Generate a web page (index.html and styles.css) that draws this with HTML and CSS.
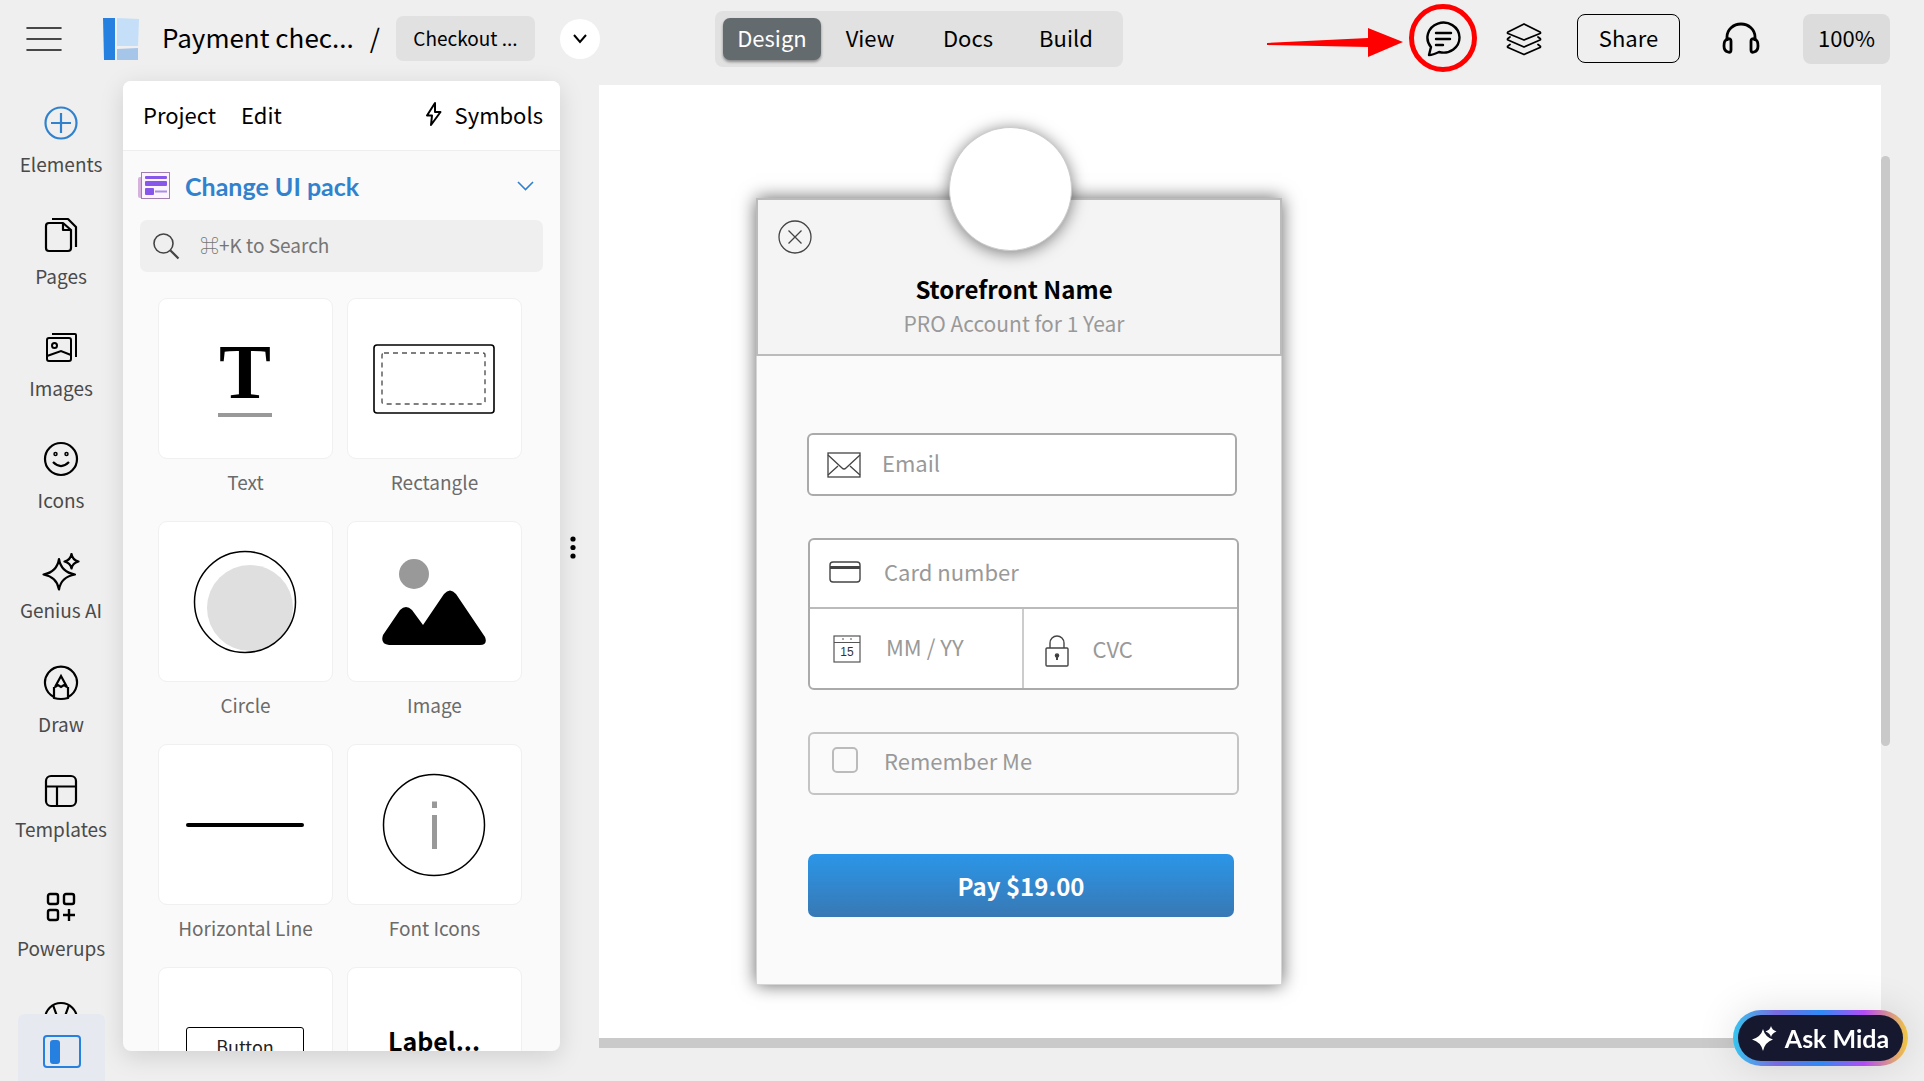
FILE: index.html
```html
<!DOCTYPE html>
<html lang="en">
<head>
  <meta charset="UTF-8" />
  <meta name="viewport" content="width=device-width, initial-scale=1.0"/>
  <title>Payment checkout</title>
  <link rel="stylesheet" href="styles.css">
</head>
<body>
  <header class="topbar">
    <button class="icon-btn" aria-label="Menu">
      <svg width="36" height="24" viewBox="0 0 36 24" stroke="#111" stroke-width="1.600" stroke-linecap="round"><path d="M1 1h34M1 12h34M1 23h34"/></svg>
    </button>
    <a class="logo" href="#" aria-label="Home">
      <svg width="36" height="42" viewBox="0 0 36 42"><path fill="#2680e0" d="M0 0h12v42H1z"/><path fill="#c5dff9" d="M14 0l22 1-1 27H14z"/><path fill="#a5c5e9" d="M14 31l21-1v12H14z"/></svg>
    </a>
    <span class="project-name">Payment chec...</span>
    <span class="slash">/</span>
    <button class="page-btn">Checkout ...</button>
    <button class="round-btn" aria-label="More pages">
      <svg width="16" height="10" viewBox="0 0 16 10" fill="none" stroke="#000" stroke-width="2"><path d="M2 1l6 7 6-7"/></svg>
    </button>

    <nav class="modes">
      <button class="mode active">Design</button>
      <button class="mode">View</button>
      <button class="mode">Docs</button>
      <button class="mode">Build</button>
    </nav>

    <div class="tools">
      <div class="comment-tool">
        <button class="icon-btn" aria-label="Comments">
          <svg width="36" height="36" viewBox="0 0 36 36" fill="none" stroke="#000" stroke-width="2.4" stroke-linecap="round" stroke-linejoin="round"><path d="M4 34l2-8A16 15 0 1 1 14 31C10 33 7 34 4 34z"/><path d="M11 12h15M11 18h14M11 24h7"/></svg>
        </button>
        <span class="callout"></span>
        <svg class="arrow" width="136" height="30" viewBox="0 0 136 30" fill="#f00"><path d="M0 15l101-5V0l35 14-35 15V19L0 17z"/></svg>
      </div>
      <button class="icon-btn layers" aria-label="Layers">
        <svg width="36" height="34" viewBox="0 0 36 34" fill="none" stroke="#000" stroke-width="1.8" stroke-linejoin="round" stroke-linecap="round"><path d="M18 2l16 8q1 1 0 1.500L18 18 2 11.500q-1-.5 0-1.500z"/><path d="M4 15l-2 1.500q-1 1 0 1.500L18 25l16-7q1-.5 0-1.500L32 15"/><path d="M4 22.500L2 24q-1 .5 0 1.500L18 32.500l16-7q1-1 0-1.500l-2-1.500"/></svg>
      </button>
      <button class="share-btn">Share</button>
      <button class="icon-btn help" aria-label="Support">
        <svg width="38" height="34" viewBox="0 0 38 34" fill="none" stroke="#000" stroke-width="2.8"><path d="M5 19v-4a14 13 0 0 1 28 0v4"/><path d="M4 18q-2 1-2 6t4 6q3 1 3-2v-9q0-3-4-2zM34 18q2 1 2 6t-4 6q-3 1-3-2v-9q0-3 4-2z"/></svg>
      </button>
      <button class="zoom-btn">100%</button>
    </div>
  </header>

  <main class="editor">
    <nav class="rail">
      <button class="rail-item active">
        <svg width="36" height="36" viewBox="0 0 36 36" fill="none" stroke="#3182ce" stroke-width="2.200"><circle cx="18" cy="18" r="15.500"/><path d="M8 18h20M18 8v20"/></svg>
        Elements
      </button>
      <button class="rail-item">
        <svg width="36" height="36" viewBox="0 0 36 36" fill="none" stroke="#000" stroke-width="2.200" stroke-linejoin="round"><path d="M6 6h14l8 7v18q0 3-3 3H6q-3 0-3-3V9q0-3 3-3z"/><path d="M20 6v7h8"/><path d="M9 2h16l8 8v20"/></svg>
        Pages
      </button>
      <button class="rail-item">
        <svg width="36" height="36" viewBox="0 0 36 36" fill="none" stroke="#000" stroke-width="2"><rect x="4" y="9" width="24" height="23" rx="2"/><circle cx="11.500" cy="16.500" r="2.500"/><path d="M4 27l14-5 10 4"/><path d="M9 5h23q1 0 1 1v22" /></svg>
        Images
      </button>
      <button class="rail-item">
        <svg width="36" height="36" viewBox="0 0 36 36" fill="none" stroke="#000" stroke-width="2.200"><circle cx="18" cy="18" r="16"/><circle cx="12.500" cy="13" r="1.500" stroke-width="1.500"/><circle cx="23.500" cy="13" r="1.500" stroke-width="1.500"/><path d="M10 21q8 8 16 0"/></svg>
        Icons
      </button>
      <button class="rail-item genius">
        <svg width="38" height="38" viewBox="0 0 38 38" fill="none" stroke="#000" stroke-width="2.200" stroke-linejoin="round"><path d="M17 6q2 13 16 15.500Q19 24 17 36.500 15 24 1.500 21.500 15 19 17 6z"/><path d="M29.500 1q1 6 7 7.500-6 1.500-7 7-1-5.500-7-7 6-1.500 7-7.500z"/></svg>
        Genius AI
      </button>
      <button class="rail-item">
        <svg width="36" height="36" viewBox="0 0 36 36" fill="none" stroke="#000" stroke-width="2.200"><path d="M11 32a16 16 0 1 1 14 0"/><path d="M12 22l6-11 6 11-3-2-3 2-3-2zM11 22v11q7 2 14 0V22"/></svg>
        Draw
      </button>
      <button class="rail-item templates">
        <svg width="36" height="36" viewBox="0 0 36 36" fill="none" stroke="#000" stroke-width="2.200"><rect x="3" y="3" width="30" height="30" rx="5"/><path d="M3 13.500h30M14 13.500V33"/></svg>
        Templates
      </button>
      <button class="rail-item">
        <svg width="36" height="36" viewBox="0 0 36 36" fill="none" stroke="#000" stroke-width="2.400"><rect x="5" y="5" width="10" height="10" rx="2"/><rect x="21" y="5" width="10" height="10" rx="2"/><rect x="5" y="21" width="10" height="10" rx="2"/><path d="M20 26h12M26 20v12"/></svg>
        Powerups
      </button>
      <button class="rail-item" aria-label="Web">
        <svg width="36" height="36" viewBox="0 0 36 36" fill="none" stroke="#000" stroke-width="2.200"><circle cx="18" cy="18" r="16"/><path d="M10 4l5 14M26 4l-5 14"/></svg>
      </button>
      <button class="panel-toggle" aria-label="Toggle panel">
        <svg width="40" height="34" viewBox="0 0 40 34"><rect x="2" y="1" width="36" height="31" rx="3" fill="none" stroke="#2680e0" stroke-width="2"/><rect x="8" y="5" width="10" height="24" rx="3" fill="#2680e0"/></svg>
      </button>
    </nav>

    <aside class="panel">
      <div class="panel-menu">
        <button class="menu-btn">Project</button>
        <button class="menu-btn">Edit</button>
        <button class="menu-btn symbols">
          <svg width="17" height="26" viewBox="0 0 17 26" fill="none" stroke="#000" stroke-width="2" stroke-linejoin="round"><path d="M10 2L2 14.500h5L6 24l9.500-13H10z"/></svg>
          Symbols
        </button>
      </div>

      <button class="pack">
        <svg width="33" height="27" viewBox="0 0 33 27"><rect y="5" width="8" height="21" rx="2" fill="#d5b3dc"/><rect x="3.500" y=".5" width="28" height="26" fill="#fbf3fd" stroke="#a07fb0"/><g fill="#8657e8"><rect x="7" y="4" width="22" height="3" rx="1"/><rect x="7" y="9" width="22" height="5" rx="1"/><rect x="7" y="16" width="9" height="7" rx="1"/></g><path d="M17 19.500h12" stroke="#a98be8" stroke-width="2"/></svg>
        <span>Change UI pack</span>
        <svg class="pack-arrow" width="17" height="10" viewBox="0 0 17 10" fill="none" stroke="#3182ce" stroke-width="1.600"><path d="M1 1l7.500 7.500L16 1"/></svg>
      </button>

      <label class="search">
        <svg width="27" height="27" viewBox="0 0 27 27" fill="none" stroke="#444"><circle cx="10.500" cy="10.500" r="9.500" stroke-width="1.600"/><path d="M17.500 17.500l8 8" stroke-width="2.200"/></svg>
        <input type="text" placeholder="⌘+K to Search" aria-label="Search elements">
      </label>

      <div class="elements">
        <button class="element">
          <span class="tile">
            <span class="text-sample">T</span>
          </span>
          Text
        </button>
        <button class="element">
          <span class="tile">
            <svg width="122" height="70" viewBox="0 0 122 70" fill="none"><rect x="1" y="1" width="120" height="68" rx="3" stroke="#000" stroke-width="1.600"/><rect x="9" y="9" width="103" height="51" rx="2" stroke="#555" stroke-width="1.400" stroke-dasharray="5 4"/></svg>
          </span>
          Rectangle
        </button>
        <button class="element">
          <span class="tile">
            <svg width="104" height="104" viewBox="0 0 104 104"><circle cx="57" cy="58" r="43" fill="#dfdfdf"/><circle cx="52" cy="52" r="50.500" fill="none" stroke="#000" stroke-width="1.500"/></svg>
          </span>
          Circle
        </button>
        <button class="element">
          <span class="tile">
            <svg width="104" height="86" viewBox="0 0 104 86"><circle cx="32" cy="15" r="15" fill="#999"/><path d="M18 51q6-6 12 0l11 15 21-31q6-7 12 0l29 43q3 8-5 8H7q-9-1-6-10z" fill="#000"/></svg>
          </span>
          Image
        </button>
        <button class="element">
          <span class="tile"><span class="line-sample"></span></span>
          Horizontal Line
        </button>
        <button class="element">
          <span class="tile">
            <svg width="104" height="104" viewBox="0 0 104 104"><circle cx="52" cy="52" r="50.500" fill="none" stroke="#000" stroke-width="1.500"/><path d="M52.500 28.500V35M52.500 42v34" stroke="#999" stroke-width="5"/></svg>
          </span>
          Font Icons
        </button>
        <button class="element">
          <span class="tile"><span class="button-sample">Button</span></span>
        </button>
        <button class="element">
          <span class="tile"><span class="label-sample">Label...</span></span>
        </button>
      </div>
    </aside>

    <div class="splitter">
      <svg width="6" height="23" viewBox="0 0 6 23"><circle cx="3" cy="3" r="2.600"/><circle cx="3" cy="11.500" r="2.600"/><circle cx="3" cy="20" r="2.600"/></svg>
    </div>

    <section class="workspace">
      <div class="canvas">
        <form class="checkout">
          <div class="avatar"></div>
          <div class="checkout-head">
            <button class="close" type="button" aria-label="Close">
              <svg width="34" height="34" viewBox="0 0 34 34" fill="none" stroke="#444" stroke-width="1.300"><circle cx="17" cy="17" r="16"/><path d="M10.500 10.500l13 13M23.500 10.500l-13 13"/></svg>
            </button>
            <h1>Storefront Name</h1>
            <p>PRO Account for 1 Year</p>
          </div>
          <div class="checkout-body">
            <label class="box email">
              <svg width="34" height="26" viewBox="0 0 34 26" fill="none" stroke="#444" stroke-width="1.300"><rect x="1" y="1" width="32" height="24"/><path d="M1 3l14 13q2 2 4 0L33 3M1 23l10-9M33 23l-10-9"/></svg>
              <input type="email" placeholder="Email" aria-label="Email">
            </label>

            <div class="card-group">
              <label class="cell number">
                <svg width="34" height="22" viewBox="0 0 34 22" fill="none" stroke="#444" stroke-width="1.400"><rect x="2" y="1" width="30" height="20" rx="3"/><path d="M2 6.500h30" stroke-width="3"/></svg>
                <input type="text" placeholder="Card number" aria-label="Card number">
              </label>
              <label class="cell expiry">
                <svg width="34" height="28" viewBox="0 0 34 28" fill="none" stroke="#555" stroke-width="1.200"><rect x="4" y="1" width="26" height="26"/><path d="M4 7.500h26M12 4h2M20 4h2"/><text x="17" y="21" text-anchor="middle">15</text></svg>
                <input type="text" placeholder="MM / YY" aria-label="Expiry date">
              </label>
              <label class="cell cvc">
                <svg width="24" height="32" viewBox="0 0 24 32" fill="none" stroke="#444" stroke-width="1.400"><rect x="1" y="13" width="22" height="18" rx="1"/><path d="M5 13V8a7 7 0 0 1 14 0v5"/><circle cx="12" cy="20.500" r="1.600" fill="#333"/><path d="M12 21v4" stroke-width="2"/></svg>
                <input type="text" placeholder="CVC" aria-label="CVC">
              </label>
            </div>

            <label class="box remember">
              <input type="checkbox">
              Remember Me
            </label>

            <button class="pay" type="button">Pay $19.00</button>
          </div>
        </form>
      </div>
      <div class="scroll-y"><div class="thumb"></div></div>
      <div class="scroll-x"></div>
    </section>
  </main>

  <button class="mida">
    <svg width="25" height="25" viewBox="0 0 25 25" fill="#fff"><path d="M11 3q2 8 10 10.500Q13 16 11 25 9 16 0 13.500 9 11 11 3z"/><path d="M19 0q1 4 5.500 5.500Q20 7 19 11 18 7 13.500 5.500 18 4 19 0z"/></svg>
    Ask Mida
  </button>
</body>
</html>
```
FILE: styles.css
```css
* {
  box-sizing: border-box;
}

body {
  margin: 0;
  height: 100vh;
  display: flex;
  flex-direction: column;
  overflow: hidden;
  background: #efefef;
  color: #000;
  font-family: "Noto Sans CJK SC", "Noto Sans", sans-serif;
  font-size: 22px;
  line-height: 28px;
}

button,
input {
  font: inherit;
  color: inherit;
}

button {
  padding: 0;
  border: 0;
  background: none;
  cursor: pointer;
  white-space: nowrap;
}

svg {
  display: block;
  flex-shrink: 0;
}

/* top bar */

.topbar {
  height: 85px;
  flex-shrink: 0;
  display: flex;
  align-items: center;
  padding: 0 34px 8px 26px;
}

.logo {
  margin-left: 41px;
}

.project-name,
.slash {
  padding-bottom: 3px;
  font-size: 26px;
  white-space: nowrap;
}

.project-name {
  margin-left: 23px;
}

.slash {
  margin-left: 16px;
}

.page-btn {
  width: 139px;
  height: 45px;
  margin-left: 16px;
  padding-bottom: 2px;
  border-radius: 7px;
  background: #e1e1e1;
  font-size: 19px;
}

.round-btn {
  width: 40px;
  height: 40px;
  margin-left: 25px;
  border-radius: 50%;
  background: #fff;
  display: flex;
  align-items: center;
  justify-content: center;
}

.modes {
  display: flex;
  margin-left: 115px;
  padding: 7px 8px;
  border-radius: 8px;
  background: #e1e1e1;
}

.mode {
  width: 98px;
  height: 42px;
  padding-bottom: 3px;
  border-radius: 7px;
}

.mode.active {
  background: #646b6f;
  color: #fff;
  box-shadow: 0 2px 3px rgba(0, 0, 0, 0.4);
}

.tools {
  display: flex;
  align-items: center;
  margin-left: auto;
}

.comment-tool {
  position: relative;
  padding-top: 5px;
}

.callout {
  position: absolute;
  top: -12px;
  left: -16px;
  width: 68px;
  height: 68px;
  border: 5px solid #f00;
  border-radius: 50%;
  pointer-events: none;
}

.arrow {
  position: absolute;
  top: 12px;
  left: -158px;
}

.layers {
  margin-left: 45px;
}

.share-btn {
  width: 103px;
  height: 49px;
  margin-left: 35px;
  padding-bottom: 4px;
  border: 1px solid #000;
  border-radius: 8px;
}

.help {
  margin-left: 42px;
}

.zoom-btn {
  width: 87px;
  height: 50px;
  margin-left: 43px;
  padding-bottom: 3px;
  border-radius: 8px;
  background: #dcdcdc;
}

/* editor columns */

.editor {
  flex: 1;
  min-height: 0;
  display: grid;
  grid-template-columns: 123px 437px 39px 1fr;
  grid-template-rows: 100%;
}

.rail {
  position: relative;
  display: flex;
  flex-direction: column;
  gap: 40px;
  padding: 20px 1px 0 0;
  overflow: hidden;
}

.rail-item {
  display: flex;
  flex-direction: column;
  align-items: center;
  justify-content: space-between;
  flex-shrink: 0;
  height: 71px;
  margin-bottom: 1px;
  color: #4a4a4a;
  font-size: 19px;
  line-height: 24px;
}

.genius {
  height: 69px;
  margin-bottom: 3px;
}

.templates {
  height: 68px;
  margin: -4px 0 8px;
}

.panel-toggle {
  position: absolute;
  left: 18px;
  bottom: 0;
  display: flex;
  align-items: center;
  justify-content: center;
  width: 87px;
  height: 67px;
  padding-top: 8px;
  border-radius: 6px 6px 0 0;
  background: #e6eaf0;
}

/* elements panel */

.panel {
  margin: -4px 0 30px;
  border-radius: 8px;
  overflow: hidden;
  background: #fafafa;
  box-shadow: 0 6px 24px rgba(0, 0, 0, 0.13);
}

.panel-menu {
  display: flex;
  align-items: center;
  gap: 25px;
  height: 70px;
  padding: 0 17px 3px 20px;
  border-bottom: 1px solid #eee;
  background: #fff;
}

.symbols {
  display: flex;
  align-items: center;
  gap: 13px;
  margin-left: auto;
}

.pack {
  display: flex;
  align-items: center;
  width: 100%;
  height: 69px;
  padding: 0 26px 0 15px;
  gap: 14px;
  color: #3182ce;
  font-family: Lato, sans-serif;
  font-size: 25px;
  font-weight: bold;
}

.pack-arrow {
  margin-left: auto;
}

.search {
  display: flex;
  align-items: center;
  gap: 20px;
  height: 52px;
  margin: 0 17px;
  padding: 0 13px;
  border-radius: 7px;
  background: #efefef;
}

.search input {
  flex: 1;
  min-width: 0;
  padding: 0 0 3px;
  border: 0;
  outline: 0;
  background: none;
  font-size: 19px;
}

.search input::placeholder {
  color: #757575;
}

.elements {
  display: grid;
  grid-template-columns: 1fr 1fr;
  gap: 27px 14px;
  padding: 26px 38px 0 35px;
}

.element {
  display: flex;
  flex-direction: column;
  gap: 11px;
  color: #6b6b6b;
  font-size: 19px;
  line-height: 24px;
  align-items: stretch;
}

.tile {
  display: flex;
  align-items: center;
  justify-content: center;
  height: 161px;
  padding-right: 1px;
  border: 1px solid #f0f0f0;
  border-radius: 9px;
  background: #fff;
}

.text-sample {
  width: 54px;
  padding-bottom: 10px;
  border-bottom: 4px solid #999;
  color: #000;
  font-family: "Liberation Serif", serif;
  font-size: 78px;
  font-weight: bold;
  line-height: 62px;
}

.line-sample {
  width: 118px;
  height: 4px;
  border-radius: 2px;
  background: #000;
}

.button-sample {
  width: 118px;
  height: 42px;
  border: 1px solid #000;
  border-radius: 3px;
  color: #222;
  font-size: 18px;
  line-height: 36px;
}

.label-sample {
  padding-bottom: 16px;
  color: #000;
  font-size: 25px;
  font-weight: bold;
}

.splitter {
  padding: 451px 0 0 10px;
}

/* workspace */

.workspace {
  display: grid;
  grid-template-columns: 1fr 9px;
  grid-template-rows: 1fr 10px;
  margin: 0 34px 33px 0;
}

.canvas {
  padding: 113px 0 0 157px;
  background: #fff;
}

.scroll-y {
  padding-top: 71px;
}

.thumb {
  height: 590px;
  border-radius: 5px;
  background: #c9c9c9;
}

.scroll-x {
  background: #cacaca;
}

.checkout {
  position: relative;
  width: 526px;
  background: #fafafa;
  box-shadow: 0 0 17px rgba(0, 0, 0, 0.6);
  color: #999;
}

.avatar {
  position: absolute;
  top: -71px;
  left: 193px;
  width: 123px;
  height: 124px;
  border: 1px solid #ccc;
  border-radius: 50%;
  background: #fff;
  box-shadow: 0 2px 16px rgba(0, 0, 0, 0.5);
}

.checkout-head {
  height: 158px;
  padding: 20px 20px 0;
  border: 2px solid #bbb;
  background: #f4f4f4;
}

.checkout-head h1,
.checkout-head p {
  margin: 0;
  padding-right: 10px;
  text-align: center;
}

.checkout-head h1 {
  margin-top: 18px;
  color: #000;
  font-size: 24px;
  line-height: 34px;
}

.checkout-head p {
  font-size: 21px;
  line-height: 34px;
}

.close {
  display: block;
}

.checkout-body {
  display: flex;
  flex-direction: column;
  padding: 77px 42px 67px 51px;
  border: 1px solid #d5d5d5;
  border-top: 0;
}

.checkout input {
  flex: 1;
  min-width: 0;
  width: 0;
  padding: 0 0 5px;
  border: 0;
  outline: 0;
  background: none;
}

.checkout input::placeholder {
  color: #999;
}

.box {
  display: flex;
  align-items: center;
  height: 63px;
  border: 2px solid #aaa;
  border-radius: 6px;
}

.email {
  margin: 0 2px 0 -1px;
  padding-left: 18px;
  gap: 21px;
  background: #fff;
}

.card-group {
  display: grid;
  grid-template-columns: 1fr 1fr;
  margin-top: 42px;
  border: 2px solid #aaa;
  border-radius: 6px;
  background: #fff;
}

.cell {
  display: flex;
  align-items: center;
  gap: 22px;
  height: 79px;
  padding-left: 18px;
}

.number {
  grid-column: 1 / 3;
  height: 69px;
  border-bottom: 2px solid #bbb;
}

.number svg {
  margin-bottom: 3px;
}

.expiry {
  padding-left: 20px;
  border-right: 2px solid #ccc;
}

.expiry text {
  fill: #333;
  stroke: none;
  font-family: "Liberation Sans", sans-serif;
  font-size: 12px;
}

.cvc {
  padding: 4px 0 0 21px;
  gap: 24px;
}

.remember {
  margin-top: 42px;
  padding: 0 0 7px 22px;
  gap: 26px;
  border-color: #c4c4c4;
}

.checkout .remember input {
  appearance: none;
  flex: none;
  width: 26px;
  height: 26px;
  margin: 0;
  padding: 0;
  border: 2px solid #bbb;
  border-radius: 5px;
}

.pay {
  height: 63px;
  margin: 59px 5px 0 0;
  border-radius: 7px;
  background: linear-gradient(#2b96e8, #3878b4);
  color: #fff;
  font-size: 24px;
  font-weight: bold;
}

/* assistant button */

.mida {
  position: fixed;
  right: 16px;
  bottom: 15px;
  display: flex;
  align-items: center;
  justify-content: center;
  gap: 8px;
  width: 175px;
  height: 56px;
  border: 5px solid transparent;
  border-radius: 28px;
  background:
    linear-gradient(#15182f, #15182f) padding-box,
    linear-gradient(90deg, #35c5f0, #7a6ae0 25%, #2f8bf5 50%, #b44cf5 75%, #f0c840) border-box;
  box-shadow: 0 0 40px rgba(0, 0, 0, 0.12);
  color: #fff;
  font-family: Lato, sans-serif;
  font-size: 25px;
  font-weight: bold;
}
```
